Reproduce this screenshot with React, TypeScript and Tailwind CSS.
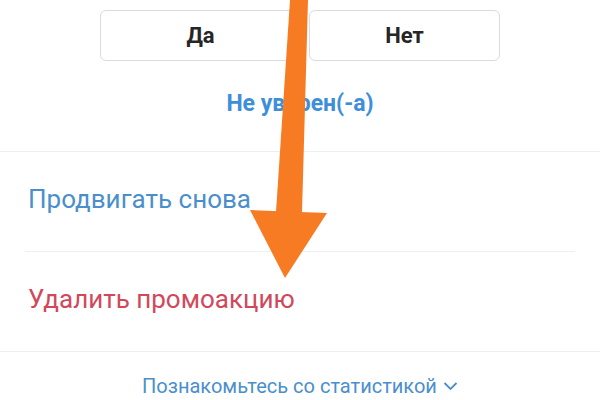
import React from 'react';

function Arrow() {
  return (
    <svg className="pointer-events-none absolute left-0 top-0" width="600" height="400" viewBox="0 0 600 400">
      <polygon points="290,0 308,0 302,212 276,212" fill="#f77b22" />
      <polygon points="250,210 327,213 285,278" fill="#f77b22" />
    </svg>
  );
}

export default function App() {
  return (
    <div className="relative h-[400px] w-[600px] overflow-hidden bg-white font-['Roboto',sans-serif]">
      <div className="flex justify-center gap-2 pt-[10px]">
        <button className="h-[51px] w-[201px] rounded-md border border-[#dbdbdb] bg-white text-[22px] font-bold text-[#262626]">
          Да
        </button>
        <button className="h-[51px] w-[191px] rounded-md border border-[#dbdbdb] bg-white text-[22px] font-bold text-[#262626]">
          Нет
        </button>
      </div>

      <div className="flex h-[90px] items-center justify-center pb-[3px]">
        <span className="text-[23px] font-bold text-[#3d8fd9]">Не уверен(-а)</span>
      </div>

      <div className="border-t border-[#efefef]">
        <div className="flex h-[99px] items-center px-[28px] pb-[4px]">
          <span className="text-[26px] text-[#4a8fcc]">Продвигать снова</span>
        </div>
        <div className="mx-[25px] border-t border-[#efefef]" />
        <div className="flex h-[99px] items-center px-[28px] pb-[4px]">
          <span className="text-[26px] text-[#d1485b]">Удалить промоакцию</span>
        </div>
      </div>

      <div className="border-t border-[#efefef]">
        <div className="flex h-[48px] items-center justify-center gap-[6px] pt-[19px]">
          <span className="text-[20px] text-[#4a8fcc]">Познакомьтесь со статистикой</span>
          <svg width="15" height="10" viewBox="0 0 15 10" fill="none">
            <path d="M1.5 2 L7.5 8 L13.5 2" stroke="#4a8fcc" strokeWidth="1.8" />
          </svg>
        </div>
      </div>

      <Arrow />
    </div>
  );
}
